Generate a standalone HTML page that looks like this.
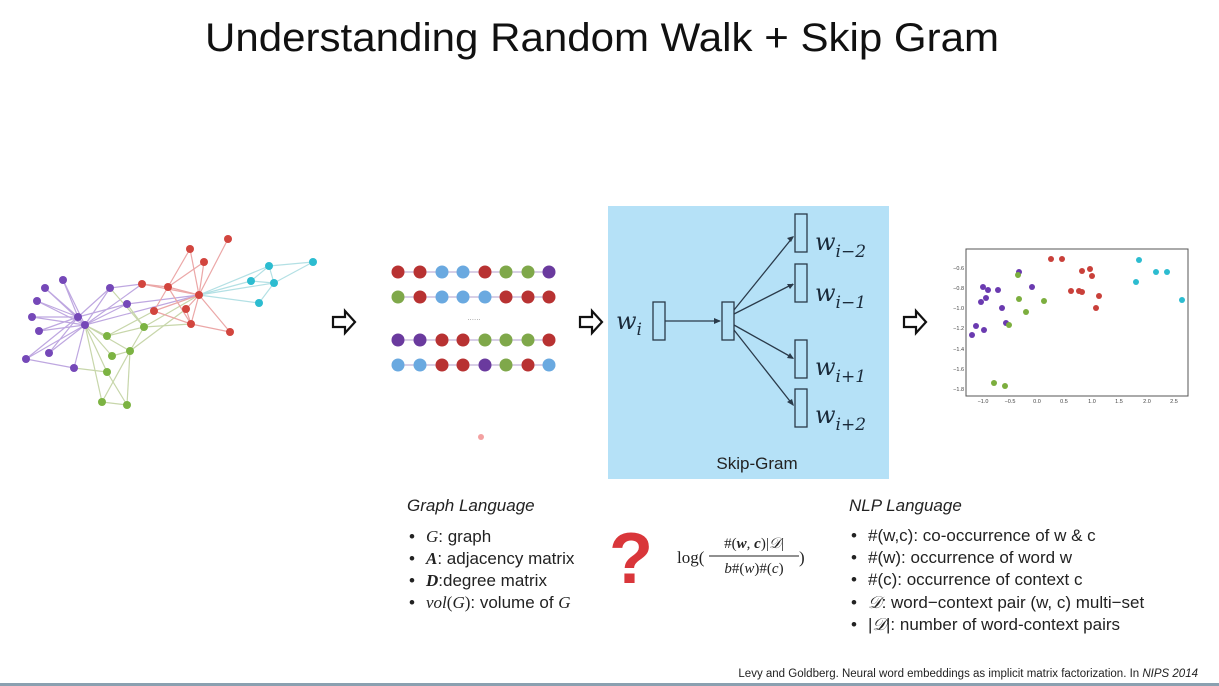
<!DOCTYPE html>
<html><head><meta charset="utf-8"><style>
html,body{margin:0;padding:0;background:#fff;}
svg{display:block;font-family:"Liberation Sans",sans-serif;}
</style></head><body>
<svg width="1219" height="686" viewBox="0 0 1219 686" xmlns="http://www.w3.org/2000/svg">
<rect width="1219" height="686" fill="#fff"/>
<text x="602" y="51" font-size="40" text-anchor="middle" textLength="794" lengthAdjust="spacingAndGlyphs" fill="#111">Understanding Random Walk + Skip Gram</text>

<!-- graph -->
<g stroke-width="1.2" opacity="0.75">
<g stroke="#a98ad6">
<line x1="78" y1="317" x2="63" y2="280"/><line x1="78" y1="317" x2="45" y2="288"/><line x1="78" y1="317" x2="37" y2="301"/><line x1="78" y1="317" x2="32" y2="317"/><line x1="78" y1="317" x2="39" y2="331"/><line x1="78" y1="317" x2="26" y2="359"/><line x1="78" y1="317" x2="49" y2="353"/><line x1="78" y1="317" x2="110" y2="288"/><line x1="78" y1="317" x2="127" y2="304"/>
<line x1="85" y1="325" x2="63" y2="280"/><line x1="85" y1="325" x2="45" y2="288"/><line x1="85" y1="325" x2="37" y2="301"/><line x1="85" y1="325" x2="32" y2="317"/><line x1="85" y1="325" x2="39" y2="331"/><line x1="85" y1="325" x2="26" y2="359"/><line x1="85" y1="325" x2="49" y2="353"/><line x1="85" y1="325" x2="74" y2="368"/><line x1="85" y1="325" x2="110" y2="288"/><line x1="85" y1="325" x2="127" y2="304"/><line x1="78" y1="317" x2="85" y2="325"/><line x1="26" y1="359" x2="74" y2="368"/><line x1="85" y1="325" x2="142" y2="284"/><line x1="110" y1="288" x2="142" y2="284"/><line x1="127" y1="304" x2="199" y2="295"/><line x1="85" y1="325" x2="199" y2="295"/>
</g>
<g stroke="#b5c98e">
<line x1="85" y1="325" x2="107" y2="336"/><line x1="85" y1="325" x2="112" y2="356"/><line x1="85" y1="325" x2="107" y2="372"/><line x1="85" y1="325" x2="102" y2="402"/><line x1="85" y1="325" x2="130" y2="351"/><line x1="74" y1="368" x2="107" y2="372"/><line x1="107" y1="336" x2="144" y2="327"/><line x1="130" y1="351" x2="144" y2="327"/><line x1="130" y1="351" x2="102" y2="402"/><line x1="130" y1="351" x2="127" y2="405"/><line x1="107" y1="372" x2="127" y2="405"/><line x1="102" y1="402" x2="127" y2="405"/><line x1="127" y1="304" x2="144" y2="327"/><line x1="110" y1="288" x2="144" y2="327"/><line x1="144" y1="327" x2="199" y2="295"/><line x1="144" y1="327" x2="191" y2="324"/><line x1="130" y1="351" x2="186" y2="309"/><line x1="107" y1="336" x2="154" y2="311"/><line x1="112" y1="356" x2="130" y2="351"/>
</g>
<g stroke="#e58a8a">
<line x1="142" y1="284" x2="168" y2="287"/><line x1="168" y1="287" x2="199" y2="295"/><line x1="168" y1="287" x2="190" y2="249"/><line x1="168" y1="287" x2="204" y2="262"/><line x1="168" y1="287" x2="154" y2="311"/><line x1="168" y1="287" x2="191" y2="324"/><line x1="199" y1="295" x2="190" y2="249"/><line x1="199" y1="295" x2="228" y2="239"/><line x1="199" y1="295" x2="204" y2="262"/><line x1="199" y1="295" x2="154" y2="311"/><line x1="199" y1="295" x2="186" y2="309"/><line x1="199" y1="295" x2="191" y2="324"/><line x1="199" y1="295" x2="230" y2="332"/><line x1="191" y1="324" x2="230" y2="332"/><line x1="154" y1="311" x2="191" y2="324"/><line x1="186" y1="309" x2="191" y2="324"/><line x1="142" y1="284" x2="199" y2="295"/>
</g>
<g stroke="#9ad6dc">
<line x1="199" y1="295" x2="269" y2="266"/><line x1="199" y1="295" x2="251" y2="281"/><line x1="199" y1="295" x2="274" y2="283"/><line x1="199" y1="295" x2="259" y2="303"/><line x1="269" y1="266" x2="313" y2="262"/><line x1="269" y1="266" x2="251" y2="281"/><line x1="269" y1="266" x2="274" y2="283"/><line x1="274" y1="283" x2="313" y2="262"/><line x1="274" y1="283" x2="259" y2="303"/><line x1="251" y1="281" x2="274" y2="283"/>
</g>
</g>
<g>
<g fill="#7548b8">
<circle cx="63" cy="280" r="4"/><circle cx="45" cy="288" r="4"/><circle cx="37" cy="301" r="4"/><circle cx="32" cy="317" r="4"/><circle cx="39" cy="331" r="4"/><circle cx="26" cy="359" r="4"/><circle cx="49" cy="353" r="4"/><circle cx="74" cy="368" r="4"/><circle cx="78" cy="317" r="4"/><circle cx="85" cy="325" r="4"/><circle cx="110" cy="288" r="4"/><circle cx="127" cy="304" r="4"/>
</g>
<g fill="#d2453e">
<circle cx="142" cy="284" r="4"/><circle cx="168" cy="287" r="4"/><circle cx="190" cy="249" r="4"/><circle cx="228" cy="239" r="4"/><circle cx="204" cy="262" r="4"/><circle cx="199" cy="295" r="4"/><circle cx="154" cy="311" r="4"/><circle cx="186" cy="309" r="4"/><circle cx="191" cy="324" r="4"/><circle cx="230" cy="332" r="4"/>
</g>
<g fill="#7cb342">
<circle cx="144" cy="327" r="4"/><circle cx="107" cy="336" r="4"/><circle cx="130" cy="351" r="4"/><circle cx="112" cy="356" r="4"/><circle cx="107" cy="372" r="4"/><circle cx="102" cy="402" r="4"/><circle cx="127" cy="405" r="4"/>
</g>
<g fill="#2cbcd0">
<circle cx="269" cy="266" r="4"/><circle cx="313" cy="262" r="4"/><circle cx="251" cy="281" r="4"/><circle cx="274" cy="283" r="4"/><circle cx="259" cy="303" r="4"/>
</g>
</g>

<!-- hollow arrows -->
<g fill="#fff" stroke="#111" stroke-width="2.2" stroke-linejoin="miter">
<path d="M333 317 H345 V311 L355 322 L345 333 V327 H333 Z"/>
<path d="M580 317 H592 V311 L602 322 L592 333 V327 H580 Z"/>
<path d="M904 317 H916 V311 L926 322 L916 333 V327 H904 Z"/>
</g>

<!-- sequences -->
<g stroke="#d8cfe6" stroke-width="2">
<line x1="398" y1="272" x2="549" y2="272"/><line x1="398" y1="297" x2="549" y2="297"/><line x1="398" y1="340" x2="549" y2="340"/><line x1="398" y1="365" x2="549" y2="365"/>
</g>
<g>
<circle cx="398" cy="272" r="6.5" fill="#b83232"/><circle cx="420" cy="272" r="6.5" fill="#b83232"/><circle cx="442" cy="272" r="6.5" fill="#6aa9e0"/><circle cx="463" cy="272" r="6.5" fill="#6aa9e0"/><circle cx="485" cy="272" r="6.5" fill="#b83232"/><circle cx="506" cy="272" r="6.5" fill="#7fa84a"/><circle cx="528" cy="272" r="6.5" fill="#7fa84a"/><circle cx="549" cy="272" r="6.5" fill="#6a3a9e"/>
<circle cx="398" cy="297" r="6.5" fill="#7fa84a"/><circle cx="420" cy="297" r="6.5" fill="#b83232"/><circle cx="442" cy="297" r="6.5" fill="#6aa9e0"/><circle cx="463" cy="297" r="6.5" fill="#6aa9e0"/><circle cx="485" cy="297" r="6.5" fill="#6aa9e0"/><circle cx="506" cy="297" r="6.5" fill="#b83232"/><circle cx="528" cy="297" r="6.5" fill="#b83232"/><circle cx="549" cy="297" r="6.5" fill="#b83232"/>
<circle cx="398" cy="340" r="6.5" fill="#6a3a9e"/><circle cx="420" cy="340" r="6.5" fill="#6a3a9e"/><circle cx="442" cy="340" r="6.5" fill="#b83232"/><circle cx="463" cy="340" r="6.5" fill="#b83232"/><circle cx="485" cy="340" r="6.5" fill="#7fa84a"/><circle cx="506" cy="340" r="6.5" fill="#7fa84a"/><circle cx="528" cy="340" r="6.5" fill="#7fa84a"/><circle cx="549" cy="340" r="6.5" fill="#b83232"/>
<circle cx="398" cy="365" r="6.5" fill="#6aa9e0"/><circle cx="420" cy="365" r="6.5" fill="#6aa9e0"/><circle cx="442" cy="365" r="6.5" fill="#b83232"/><circle cx="463" cy="365" r="6.5" fill="#b83232"/><circle cx="485" cy="365" r="6.5" fill="#6a3a9e"/><circle cx="506" cy="365" r="6.5" fill="#7fa84a"/><circle cx="528" cy="365" r="6.5" fill="#b83232"/><circle cx="549" cy="365" r="6.5" fill="#6aa9e0"/>
</g>
<text x="474" y="320" font-size="8" fill="#999" text-anchor="middle">......</text>
<circle cx="481" cy="437" r="3" fill="#f08a8a" opacity="0.8"/>

<!-- skip gram -->
<rect x="608" y="206" width="281" height="273" fill="#b5e1f7"/>
<g fill="none" stroke="#2a3a4a" stroke-width="1.3">
<rect x="653" y="302" width="12" height="38"/>
<rect x="722" y="302" width="12" height="38"/>
<rect x="795" y="214" width="12" height="38"/>
<rect x="795" y="264" width="12" height="38"/>
<rect x="795" y="340" width="12" height="38"/>
<rect x="795" y="389" width="12" height="38"/>
<line x1="665" y1="321" x2="720" y2="321"/>
<line x1="734" y1="310" x2="793" y2="237"/>
<line x1="734" y1="314" x2="793" y2="284"/>
<line x1="734" y1="325" x2="793" y2="358"/>
<line x1="734" y1="330" x2="793" y2="405"/>
</g>
<g fill="#2a3a4a">
<path d="M721 321 l-7 -3 v6 z"/>
<path d="M794 236 l-7 2 l4 4 z"/>
<path d="M794 284 l-7 0 l3 5 z"/>
<path d="M794 359 l-4 -6 l-3 5 z"/>
<path d="M794 406 l-2 -7 l-5 3 z"/>
</g>
<g font-family="'DejaVu Serif','Liberation Serif',serif" font-style="italic" fill="#1a2a3a">
<text x="616" y="329" font-size="24">w<tspan font-size="17" dy="6">i</tspan></text>
<text x="815" y="250" font-size="24">w<tspan font-size="17" dy="7">i−2</tspan></text>
<text x="815" y="301" font-size="24">w<tspan font-size="17" dy="7">i−1</tspan></text>
<text x="815" y="375" font-size="24">w<tspan font-size="17" dy="7">i+1</tspan></text>
<text x="815" y="423" font-size="24">w<tspan font-size="17" dy="7">i+2</tspan></text>
</g>
<text x="757" y="469" font-size="17" text-anchor="middle" fill="#222">Skip-Gram</text>

<!-- scatter -->
<rect x="966" y="249" width="222" height="147" fill="#fff" stroke="#555" stroke-width="1"/>
<g font-size="5.5" fill="#444" text-anchor="end">
<text x="964" y="270">−0.6</text><text x="964" y="290">−0.8</text><text x="964" y="310">−1.0</text><text x="964" y="330">−1.2</text><text x="964" y="351">−1.4</text><text x="964" y="371">−1.6</text><text x="964" y="391">−1.8</text>
</g>
<g font-size="5.5" fill="#444" text-anchor="middle">
<text x="983" y="403">−1.0</text><text x="1010" y="403">−0.5</text><text x="1037" y="403">0.0</text><text x="1064" y="403">0.5</text><text x="1092" y="403">1.0</text><text x="1119" y="403">1.5</text><text x="1147" y="403">2.0</text><text x="1174" y="403">2.5</text>
</g>
<g fill="#c9403a"><circle cx="1051" cy="259" r="3"/><circle cx="1062" cy="259" r="3"/><circle cx="1082" cy="271" r="3"/><circle cx="1090" cy="269" r="3"/><circle cx="1092" cy="276" r="3"/><circle cx="1071" cy="291" r="3"/><circle cx="1079" cy="291" r="3"/><circle cx="1082" cy="292" r="3"/><circle cx="1099" cy="296" r="3"/><circle cx="1096" cy="308" r="3"/></g>
<g fill="#2cbcd0"><circle cx="1139" cy="260" r="3"/><circle cx="1156" cy="272" r="3"/><circle cx="1167" cy="272" r="3"/><circle cx="1136" cy="282" r="3"/><circle cx="1182" cy="300" r="3"/></g>
<g fill="#6a3ab0"><circle cx="1019" cy="272" r="3"/><circle cx="983" cy="287" r="3"/><circle cx="988" cy="290" r="3"/><circle cx="998" cy="290" r="3"/><circle cx="1032" cy="287" r="3"/><circle cx="986" cy="298" r="3"/><circle cx="981" cy="302" r="3"/><circle cx="1002" cy="308" r="3"/><circle cx="976" cy="326" r="3"/><circle cx="984" cy="330" r="3"/><circle cx="972" cy="335" r="3"/><circle cx="1006" cy="323" r="3"/></g>
<g fill="#7cae3e"><circle cx="1018" cy="275" r="3"/><circle cx="1019" cy="299" r="3"/><circle cx="1026" cy="312" r="3"/><circle cx="1044" cy="301" r="3"/><circle cx="1009" cy="325" r="3"/><circle cx="994" cy="383" r="3"/><circle cx="1005" cy="386" r="3"/></g>

<!-- Graph language -->
<g fill="#222" font-size="17">
<text x="407" y="511" font-style="italic">Graph Language</text>
<text x="409" y="542">•</text><text x="426" y="542"><tspan font-family="'Liberation Serif',serif" font-style="italic">G</tspan>: graph</text>
<text x="409" y="564">•</text><text x="426" y="564"><tspan font-family="'Liberation Serif',serif" font-style="italic" font-weight="bold">A</tspan>: adjacency matrix</text>
<text x="409" y="586">•</text><text x="426" y="586"><tspan font-family="'Liberation Serif',serif" font-style="italic" font-weight="bold">D</tspan>:degree matrix</text>
<text x="409" y="608">•</text><text x="426" y="608"><tspan font-family="'Liberation Serif',serif" font-style="italic">vol</tspan><tspan font-family="'Liberation Serif',serif">(</tspan><tspan font-family="'Liberation Serif',serif" font-style="italic">G</tspan><tspan font-family="'Liberation Serif',serif">)</tspan>: volume of <tspan font-family="'Liberation Serif',serif" font-style="italic">G</tspan></text>
</g>
<text x="631" y="583" font-size="72" font-weight="bold" fill="#d9363a" text-anchor="middle">?</text>

<!-- formula -->
<g font-family="'Liberation Serif',serif" fill="#222">
<text x="677" y="563" font-size="17">log(</text>
<text x="754" y="548" font-size="15" text-anchor="middle">#(<tspan font-weight="bold" font-style="italic">w</tspan>, <tspan font-weight="bold" font-style="italic">c</tspan>)|<tspan font-style="italic">𝒟</tspan>|</text>
<line x1="709" y1="556" x2="799" y2="556" stroke="#222" stroke-width="1"/>
<text x="754" y="573" font-size="15" text-anchor="middle"><tspan font-style="italic">b</tspan>#(<tspan font-style="italic">w</tspan>)#(<tspan font-style="italic">c</tspan>)</text>
<text x="799" y="563" font-size="17">)</text>
</g>

<!-- NLP language -->
<g fill="#222" font-size="17">
<text x="849" y="511" font-style="italic">NLP Language</text>
<text x="851" y="541">•</text><text x="868" y="541">#(w,c): co-occurrence of w &amp; c</text>
<text x="851" y="563">•</text><text x="868" y="563">#(w): occurrence of word w</text>
<text x="851" y="585">•</text><text x="868" y="585">#(c): occurrence of context c</text>
<text x="851" y="608">•</text><text x="868" y="608"><tspan font-family="'Liberation Serif',serif" font-style="italic">𝒟</tspan>: word−context pair (w, c) multi−set</text>
<text x="851" y="630">•</text><text x="868" y="630">|<tspan font-family="'Liberation Serif',serif" font-style="italic">𝒟</tspan>|: number of word-context pairs</text>
</g>
<text x="1198" y="677" font-size="11.5" text-anchor="end" fill="#222">Levy and Goldberg. Neural word embeddings as implicit matrix factorization. In <tspan font-style="italic">NIPS 2014</tspan></text>
<rect x="0" y="683" width="1219" height="3" fill="#8aa0b0"/>
</svg>
</body></html>
